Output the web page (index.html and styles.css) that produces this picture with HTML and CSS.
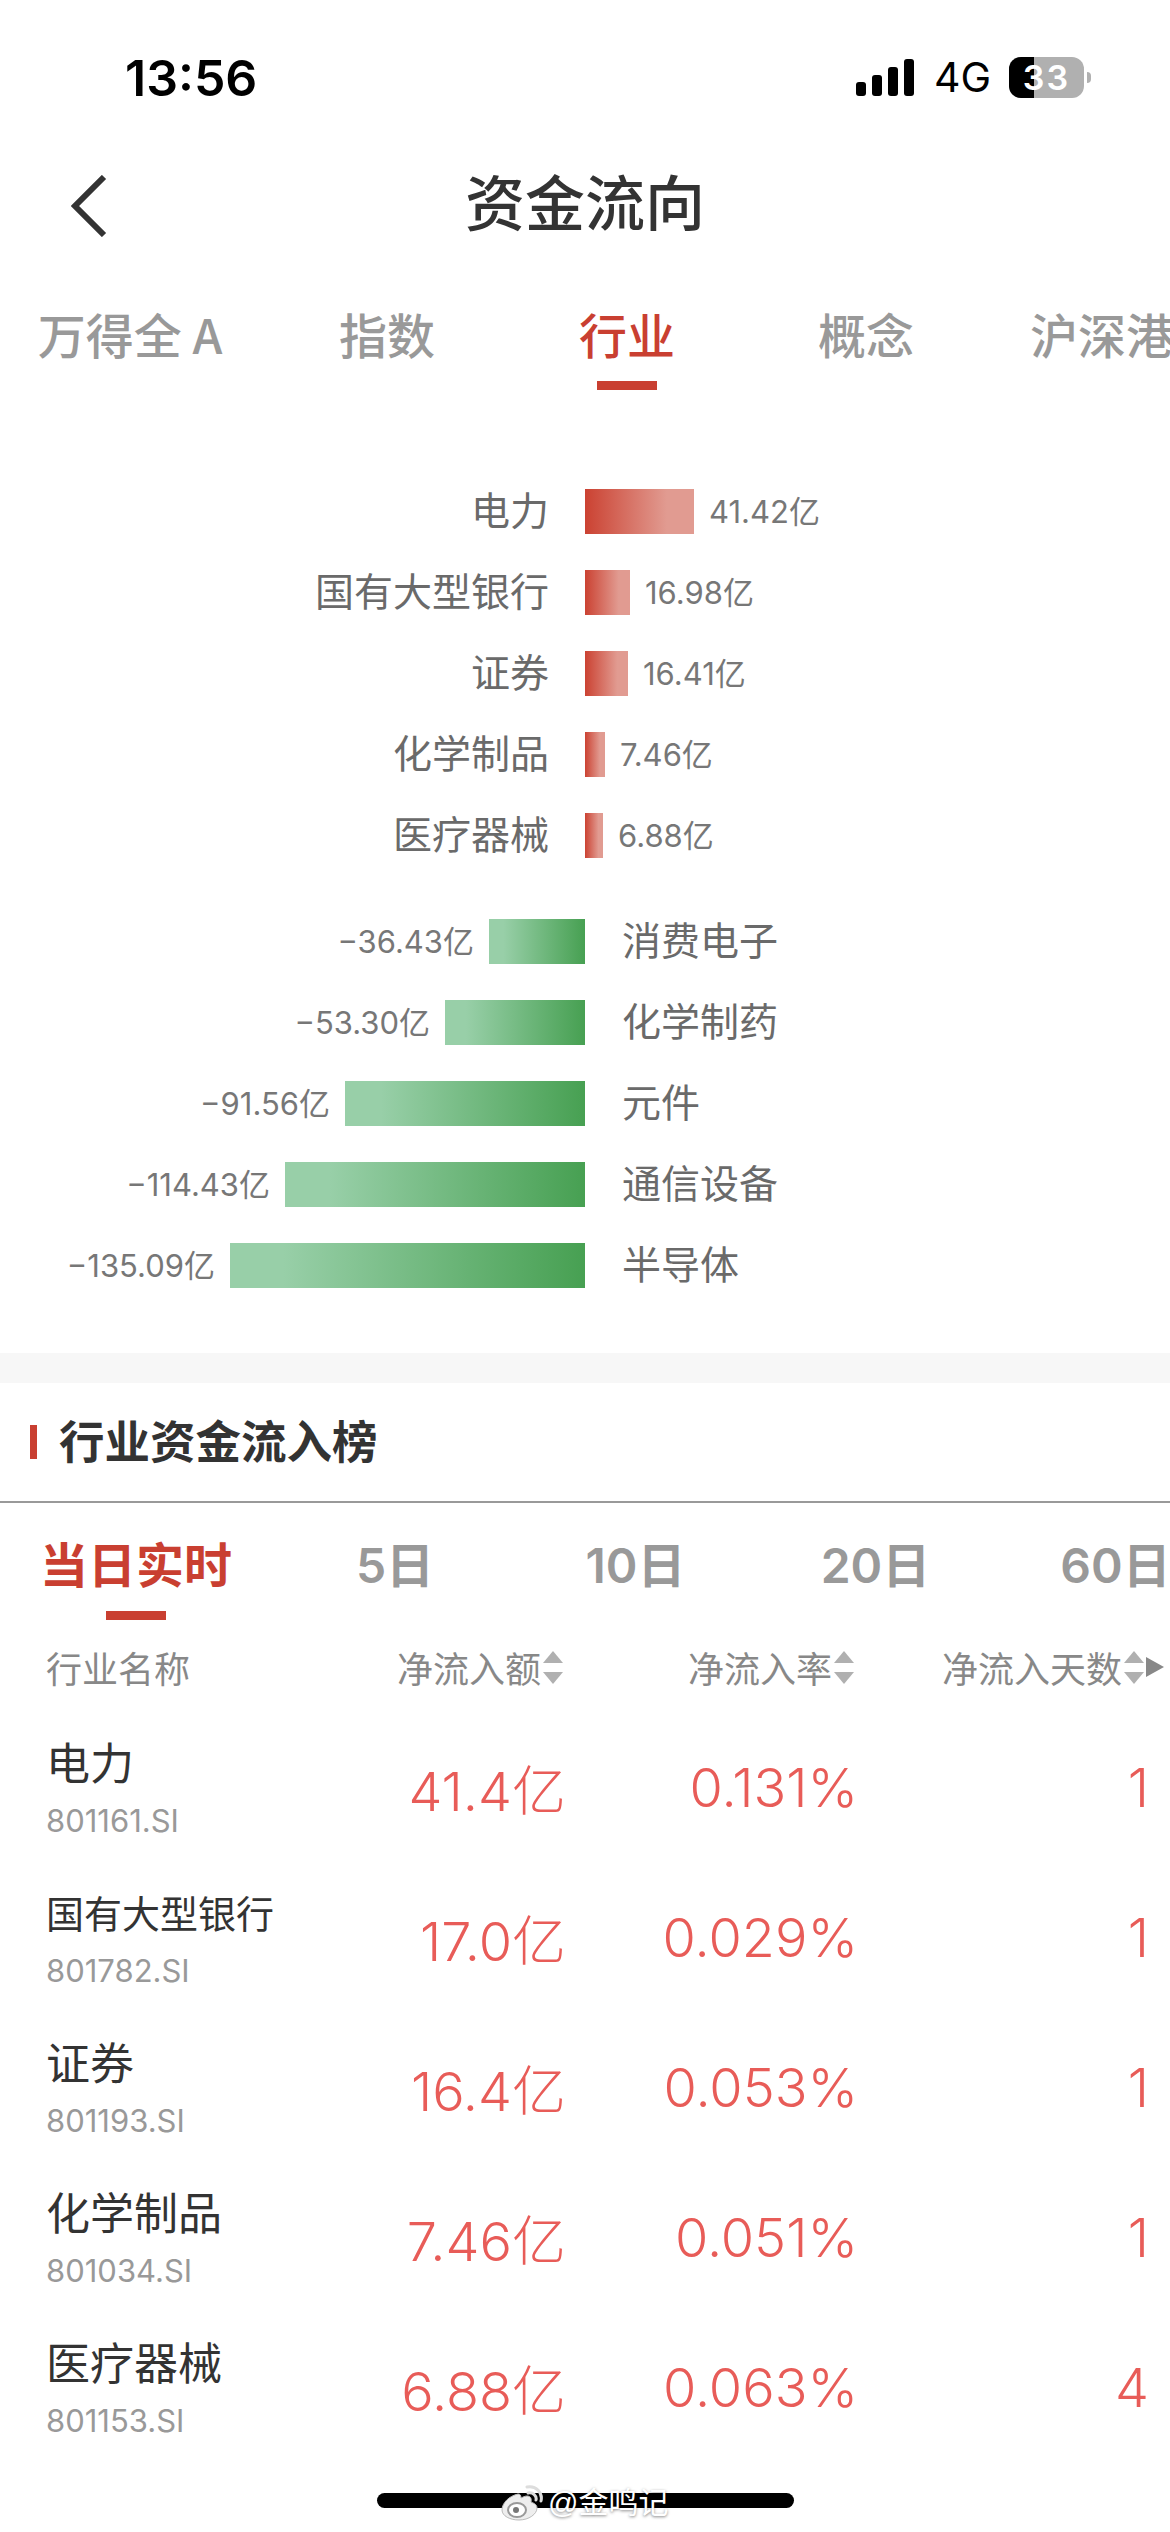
FILE: index.html
```html
<!DOCTYPE html>
<html lang="zh-CN">
<head>
  <meta charset="UTF-8" />
  <meta name="viewport" content="width=device-width, initial-scale=1.0"/>
  <title>资金流向</title>
  <link rel="stylesheet" href="styles.css">
</head>
<body>

<div class="page">
  <div class="status-bar">
    <div class="time">13:56</div>
    <div class="status-icons">
      <div class="signal">
        <span class="s1"></span><span class="s2"></span><span class="s3"></span><span class="s4"></span>
      </div>
      <div class="network">4G</div>
      <div class="battery">
        <div class="battery-body"><div class="battery-fill"></div><span>33</span></div>
        <div class="battery-nub"></div>
      </div>
    </div>
  </div>

  <div class="nav">
    <svg class="back" width="36" height="62" viewBox="0 0 36 62">
      <path d="M33 2 L4 31 L33 60" fill="none" stroke="#333" stroke-width="6"/>
    </svg>
    <div class="nav-title">资金流向</div>
    <div></div>
  </div>

  <div class="tabs">
    <div class="tab">万得全 A</div>
    <div class="tab">指数</div>
    <div class="tab active">行业</div>
    <div class="tab">概念</div>
    <div class="tab">沪深港</div>
  </div>

  <div class="chart">
    <div class="chart-row"><div class="left">电力</div><div class="right"><div class="bar red" style="width: 109px"></div><span class="val">41.42亿</span></div></div>
    <div class="chart-row"><div class="left">国有大型银行</div><div class="right"><div class="bar red" style="width: 45px"></div><span class="val">16.98亿</span></div></div>
    <div class="chart-row"><div class="left">证券</div><div class="right"><div class="bar red" style="width: 43px"></div><span class="val">16.41亿</span></div></div>
    <div class="chart-row"><div class="left">化学制品</div><div class="right"><div class="bar red" style="width: 20px"></div><span class="val">7.46亿</span></div></div>
    <div class="chart-row"><div class="left">医疗器械</div><div class="right"><div class="bar red" style="width: 18px"></div><span class="val">6.88亿</span></div></div>

    <div class="chart-row out first-out"><div class="left"><span class="val">−36.43亿</span><div class="bar green" style="width: 96px"></div></div><div class="right">消费电子</div></div>
    <div class="chart-row out"><div class="left"><span class="val">−53.30亿</span><div class="bar green" style="width: 140px"></div></div><div class="right">化学制药</div></div>
    <div class="chart-row out"><div class="left"><span class="val">−91.56亿</span><div class="bar green" style="width: 240px"></div></div><div class="right">元件</div></div>
    <div class="chart-row out"><div class="left"><span class="val">−114.43亿</span><div class="bar green" style="width: 300px"></div></div><div class="right">通信设备</div></div>
    <div class="chart-row out"><div class="left"><span class="val">−135.09亿</span><div class="bar green" style="width: 355px"></div></div><div class="right">半导体</div></div>
  </div>

  <div class="band"></div>

  <div class="section-head">
    <div class="section-mark"></div>
    <div class="section-title">行业资金流入榜</div>
  </div>

  <div class="periods">
    <div class="tab active">当日实时</div>
    <div class="tab">5日</div>
    <div class="tab">10日</div>
    <div class="tab">20日</div>
    <div class="tab">60日</div>
  </div>

  <div class="table-head">
    <div class="th-name">行业名称</div>
    <div class="th">净流入额<div class="sort"></div></div>
    <div class="th">净流入率<div class="sort"></div></div>
    <div class="th">净流入天数<div class="sort"></div><div class="more"></div></div>
  </div>

  <div class="table-row">
    <div class="stock"><div class="name">电力</div><div class="code">801161.SI</div></div>
    <div class="num">41.4亿</div><div class="num">0.131%</div><div class="num">1</div>
  </div>
  <div class="table-row">
    <div class="stock"><div class="name small">国有大型银行</div><div class="code">801782.SI</div></div>
    <div class="num">17.0亿</div><div class="num">0.029%</div><div class="num">1</div>
  </div>
  <div class="table-row">
    <div class="stock"><div class="name">证券</div><div class="code">801193.SI</div></div>
    <div class="num">16.4亿</div><div class="num">0.053%</div><div class="num">1</div>
  </div>
  <div class="table-row">
    <div class="stock"><div class="name">化学制品</div><div class="code">801034.SI</div></div>
    <div class="num">7.46亿</div><div class="num">0.051%</div><div class="num">1</div>
  </div>
  <div class="table-row">
    <div class="stock"><div class="name">医疗器械</div><div class="code">801153.SI</div></div>
    <div class="num">6.88亿</div><div class="num">0.063%</div><div class="num">4</div>
  </div>

  <div class="home-bar"></div>

  <div class="watermark">
    <svg width="42" height="36" viewBox="0 0 42 36">
      <path d="M17 9 C8 11 1 18 1 25 C1 31 9 35 18 35 C28 35 36 29 36 23 C36 19 32 18 30 17 C31 13 29 11 26 11 C24 11 22 12 20 13 C20 10 19 9 17 9 Z" fill="#eee" stroke="#bbb"/>
      <ellipse cx="16" cy="25" rx="9" ry="7" fill="#fff" stroke="#999" stroke-width="2"/>
      <circle cx="15" cy="25" r="3" fill="#777"/>
      <path d="M27 8 C32 7 36 11 35 15 M26 2 C35 0 42 8 40 16" fill="none" stroke="#ddd" stroke-width="3" stroke-linecap="round"/>
    </svg>
    <span>@金鸣记</span>
  </div>
</div>

</body>
</html>
```

FILE: styles.css
```css
* {
  box-sizing: border-box;
}

body {
  margin: 0;
  background: #fff;
  font-family: "Liberation Sans", "Noto Sans CJK SC", sans-serif;
}

.page {
  position: relative;
  width: 1170px;
  height: 2532px;
  overflow: hidden;
  background: #fff;
}

/* status bar */
.status-bar {
  height: 154px;
  margin-bottom: 2px;
  display: flex;
  justify-content: space-between;
  align-items: center;
  padding: 0 79px 0 125px;
}

.time {
  font-family: Inter, "Liberation Sans", sans-serif;
  font-size: 50px;
  font-weight: 600;
  margin-top: 2px;
  color: #000;
}

.status-icons {
  display: flex;
  align-items: center;
}

.signal {
  display: flex;
  align-items: flex-end;
  gap: 6px;
  height: 37px;
  margin-right: 20px;
}

.signal span {
  width: 10px;
  background: #000;
  border-radius: 3px;
}

.signal .s1 { height: 14px; }
.signal .s2 { height: 21px; }
.signal .s3 { height: 29px; }
.signal .s4 { height: 37px; }

.network {
  width: 54px;
  font-family: Inter, "Liberation Sans", sans-serif;
  font-size: 41px;
  line-height: 41px;
  color: #000;
  margin-right: 21px;
  white-space: nowrap;
}

.battery {
  display: flex;
  align-items: center;
}

.battery-body {
  position: relative;
  width: 75px;
  height: 41px;
  border-radius: 12px;
  background: #b0b0b0;
  overflow: hidden;
  display: flex;
  justify-content: center;
  align-items: center;
}

.battery-fill {
  position: absolute;
  left: 0;
  top: 0;
  bottom: 0;
  width: 25px;
  background: #000;
}

.battery-body span {
  position: relative;
  color: #fff;
  font-family: Inter, "Liberation Sans", sans-serif;
  font-size: 34px;
  font-weight: 600;
  letter-spacing: 2px;
}

.battery-nub {
  width: 4px;
  height: 11px;
  margin-left: 3px;
  border-radius: 0 4px 4px 0;
  background: #b0b0b0;
}

/* nav */
.nav {
  height: 100px;
  display: grid;
  grid-template-columns: 1fr auto 1fr;
  align-items: center;
}

.back {
  margin-left: 71px;
}

.nav-title {
  font-size: 60px;
  line-height: 70px;
  font-weight: 500;
  color: #333;
}

/* tabs */
.tabs,
.periods {
  display: grid;
  justify-items: center;
}

.tabs {
  grid-template-columns: 260px 254px 226px 252px 220px;
  margin-top: 49px;
}

.periods {
  grid-template-columns: 272px 246px 235px 245px 235px;
  padding-top: 32px;
}

.tab {
  position: relative;
  height: 85px;
  font-family: "Noto Sans CJK SC", sans-serif;
  font-size: 48px;
  line-height: 56px;
  font-weight: 500;
  color: #999;
  white-space: nowrap;
}

.periods .tab {
  font-family: Inter, "Noto Sans CJK SC", sans-serif;
  line-height: 62px;
  font-weight: 600;
}

.tab.active {
  color: #c93f31;
}

.tab.active::after {
  content: "";
  position: absolute;
  left: 50%;
  bottom: 0;
  width: 60px;
  height: 9px;
  margin-left: -30px;
  background: #c93f31;
}

/* chart */
.chart {
  padding: 99px 0 65px;
  display: flex;
  flex-direction: column;
  gap: 36px;
}

.chart-row {
  display: grid;
  grid-template-columns: 585px 1fr;
  height: 45px;
  font-size: 39px;
  line-height: 45px;
  color: #6a6a6a;
}

.chart-row .left {
  display: flex;
  justify-content: flex-end;
  align-items: center;
  padding-right: 36px;
}

.chart-row .right {
  display: flex;
  align-items: center;
}

.chart-row.out .left {
  padding-right: 0;
}

.chart-row.out .right {
  padding-left: 37px;
}

.first-out {
  margin-top: 25px;
}

.bar {
  height: 45px;
}

.bar.red {
  background: linear-gradient(90deg, #cb4232, #e19b91 75%);
}

.bar.green {
  background: linear-gradient(90deg, #98cfa8 15%, #47a052);
}

.val {
  font-family: Inter, "Noto Sans CJK SC", sans-serif;
  font-size: 31px;
  color: #777;
  margin-left: 15px;
}

.out .val {
  margin-left: 0;
  margin-right: 15px;
}

.band {
  height: 30px;
  background: #f7f7f7;
}

/* section heading */
.section-head {
  height: 120px;
  display: flex;
  align-items: center;
  padding-left: 30px;
  border-bottom: 2px solid #999;
}

.section-mark {
  width: 7px;
  height: 34px;
  background: #c93f31;
  margin-right: 22px;
}

.section-title {
  font-size: 45.5px;
  line-height: 56px;
  margin-top: 4px;
  font-weight: 700;
  color: #333;
}

/* table */
.table-head,
.table-row {
  display: grid;
  padding-left: 46px;
}

.table-head {
  grid-template-columns: 200px 317px 291px 310px;
  height: 48px;
  margin-top: 21px;
  margin-bottom: 23px;
  align-items: center;
  font-size: 36px;
  color: #888;
}

.th {
  display: flex;
  justify-content: flex-end;
  align-items: center;
  white-space: nowrap;
}

.sort {
  display: flex;
  flex-direction: column;
  gap: 9px;
  margin-left: 2px;
}

.sort::before,
.sort::after {
  content: "";
  width: 0;
  border-left: 10px solid transparent;
  border-right: 10px solid transparent;
}

.sort::before {
  border-bottom: 12px solid #b0b0b0;
}

.sort::after {
  border-top: 12px solid #b0b0b0;
}

.more {
  width: 0;
  margin-left: 2px;
  border-left: 18px solid #888;
  border-top: 10px solid transparent;
  border-bottom: 10px solid transparent;
}

.table-row {
  grid-template-columns: 200px 320px 292px 291px;
  height: 150px;
  align-items: center;
}

.stock {
  padding-top: 4px;
}

.name {
  height: 56px;
  line-height: 56px;
  font-size: 44px;
  color: #333;
  margin-bottom: 8px;
  white-space: nowrap;
}

.name.small {
  font-size: 38px;
}

.code {
  height: 40px;
  line-height: 40px;
  font-family: Inter, "Liberation Sans", sans-serif;
  font-size: 31px;
  color: #999;
}

.num {
  text-align: right;
  font-family: Inter, "Noto Sans CJK SC", sans-serif;
  font-size: 54px;
  font-weight: 300;
  color: #e85c58;
}

/* overlays */
.home-bar {
  position: absolute;
  left: 377px;
  top: 2493px;
  width: 417px;
  height: 15px;
  border-radius: 8px;
  background: #000;
}

.watermark {
  position: absolute;
  left: 501px;
  top: 2485px;
  display: flex;
  align-items: center;
  gap: 5px;
  font-size: 30px;
  line-height: 36px;
  color: #fff;
  text-shadow: 0 1px 3px rgba(0, 0, 0, 0.5);
}
```
